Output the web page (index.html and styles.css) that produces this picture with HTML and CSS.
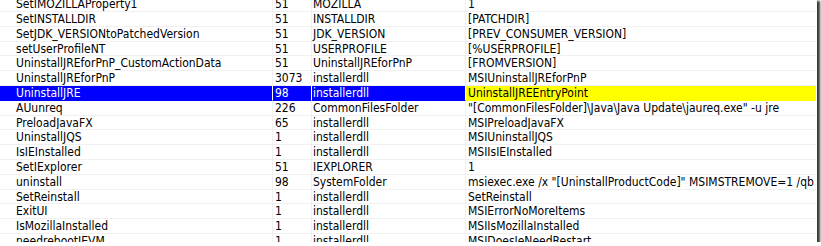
FILE: index.html
```html
<!DOCTYPE html>
<html>
<head>
<meta charset="utf-8">
<link rel="stylesheet" href="styles.css">
</head>
<body>
<div class="frame">
  <div class="grid">
    <div class="c a">SetIMOZILLAProperty1</div><div class="c t">51</div><div class="c s">MOZILLA</div><div class="c g">1</div>
    <div class="c a">SetINSTALLDIR</div><div class="c t">51</div><div class="c s">INSTALLDIR</div><div class="c g">[PATCHDIR]</div>
    <div class="c a">SetJDK_VERSIONtoPatchedVersion</div><div class="c t">51</div><div class="c s">JDK_VERSION</div><div class="c g">[PREV_CONSUMER_VERSION]</div>
    <div class="c a">setUserProfileNT</div><div class="c t">51</div><div class="c s">USERPROFILE</div><div class="c g">[%USERPROFILE]</div>
    <div class="c a">UninstallJREforPnP_CustomActionData</div><div class="c t">51</div><div class="c s">UninstallJREforPnP</div><div class="c g">[FROMVERSION]</div>
    <div class="c a">UninstallJREforPnP</div><div class="c t">3073</div><div class="c s">installerdll</div><div class="c g">MSIUninstallJREforPnP</div>
    <div class="c a sel">UninstallJRE</div><div class="c t sel">98</div><div class="c s sel">installerdll</div><div class="c g hl">UninstallJREEntryPoint</div>
    <div class="c a">AUunreq</div><div class="c t">226</div><div class="c s">CommonFilesFolder</div><div class="c g">"[CommonFilesFolder]\Java\Java Update\jaureq.exe" -u jre</div>
    <div class="c a">PreloadJavaFX</div><div class="c t">65</div><div class="c s">installerdll</div><div class="c g">MSIPreloadJavaFX</div>
    <div class="c a">UninstallJQS</div><div class="c t">1</div><div class="c s">installerdll</div><div class="c g">MSIUninstallJQS</div>
    <div class="c a">IsIEInstalled</div><div class="c t">1</div><div class="c s">installerdll</div><div class="c g">MSIIsIEInstalled</div>
    <div class="c a">SetIExplorer</div><div class="c t">51</div><div class="c s">IEXPLORER</div><div class="c g">1</div>
    <div class="c a">uninstall</div><div class="c t">98</div><div class="c s">SystemFolder</div><div class="c g">msiexec.exe /x "[UninstallProductCode]" MSIMSTREMOVE=1 /qb</div>
    <div class="c a">SetReinstall</div><div class="c t">1</div><div class="c s">installerdll</div><div class="c g">SetReinstall</div>
    <div class="c a">ExitUI</div><div class="c t">1</div><div class="c s">installerdll</div><div class="c g">MSIErrorNoMoreItems</div>
    <div class="c a">IsMozillaInstalled</div><div class="c t">1</div><div class="c s">installerdll</div><div class="c g">MSIIsMozillaInstalled</div>
    <div class="c a">needrebootIEVM</div><div class="c t">1</div><div class="c s">installerdll</div><div class="c g">MSIDoesIeNeedRestart</div>
  </div>
</div>
</body>
</html>
```
FILE: styles.css
```css
html, body {
  margin: 0;
  padding: 0;
  background: #ffffff;
}
.frame {
  width: 817px;
  height: 242px;
  overflow: hidden;
  background: #ffffff;
  box-shadow: 2px 2px 2px 1px #3a3a3a;
}
.grid {
  display: grid;
  grid-template-columns: 273px 39px 154px 350px;
  grid-auto-rows: 14.8px;
  margin-top: -2.8px;
  font-family: "DejaVu Sans Condensed", "DejaVu Sans", sans-serif;
  font-size: 12px;
  color: #000000;
}
.c {
  box-sizing: border-box;
  border-right: 1px solid #f0f0f0;
  border-bottom: 1px solid #f0f0f0;
  white-space: nowrap;
  overflow: hidden;
  line-height: 14px;
}
.a { padding-left: 16px; }
.t { padding-left: 2px; }
.s { padding-left: 1px; }
.g { padding-left: 2px; border-right: none; }
.sel {
  background: #0000ff;
  color: #ffffff;
  border-right-color: #ffffff;
  border-bottom-color: #0000ff;
}
.hl {
  background: #ffff00;
  color: #000000;
  border-bottom-color: #ffff00;
}
```
